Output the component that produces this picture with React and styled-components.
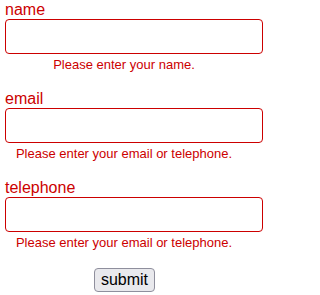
import styled, { createGlobalStyle } from "styled-components";

const GlobalStyle = createGlobalStyle`
	* {
		box-sizing: border-box;
	}
	body {
		margin: 0;
		background: #fff;
		font-family: "Liberation Sans", Arial, sans-serif;
	}
`;

const fields = [
	{ id: "name", label: "name", type: "text", error: "Please enter your name." },
	{ id: "email", label: "email", type: "email", error: "Please enter your email or telephone." },
	{ id: "telephone", label: "telephone", type: "tel", error: "Please enter your email or telephone." },
];

const App = () => {
	return (
		<>
			<GlobalStyle />
			<StyledForm onSubmit={(e) => e.preventDefault()}>
				{fields.map((field) => (
					<Field key={field.id}>
						<Label htmlFor={field.id}>{field.label}</Label>
						<Input id={field.id} type={field.type} $invalid />
						<Error>{field.error}</Error>
					</Field>
				))}
				<Actions>
					<SubmitButton type="submit">submit</SubmitButton>
				</Actions>
			</StyledForm>
		</>
	);
};

const StyledForm = styled.form`
	width: 268px;
	padding: 1px 5px 0;
	display: flex;
	flex-direction: column;
	gap: 18px;
`;

const Field = styled.div`
	display: flex;
	flex-direction: column;
`;

const Label = styled.label`
	font-size: 16px;
	line-height: 18px;
	color: #cc0000;
`;

const Input = styled.input`
	width: 100%;
	height: 35px;
	margin: 0;
	padding: 4px 8px;
	font-family: inherit;
	font-size: 16px;
	border: 1px solid ${(p) => (p.$invalid ? "#cc0000" : "#767676")};
	border-radius: 4px;
	background: #fff;
	outline: none;
`;

const Error = styled.span`
	margin-top: 3px;
	padding-right: 20px;
	font-size: 13px;
	line-height: 15px;
	color: #cc0000;
	text-align: center;
`;

const Actions = styled.div`
	padding-right: 19px;
	text-align: center;
`;

const SubmitButton = styled.button`
	font-family: "Liberation Sans", Arial, sans-serif;
	font-size: 16px;
	line-height: 18px;
	padding: 2px 6px;
	color: #000;
	background: #e9e9ed;
	border: 1px solid #8f8f9d;
	border-radius: 4px;
	cursor: pointer;
`;

export default App;
